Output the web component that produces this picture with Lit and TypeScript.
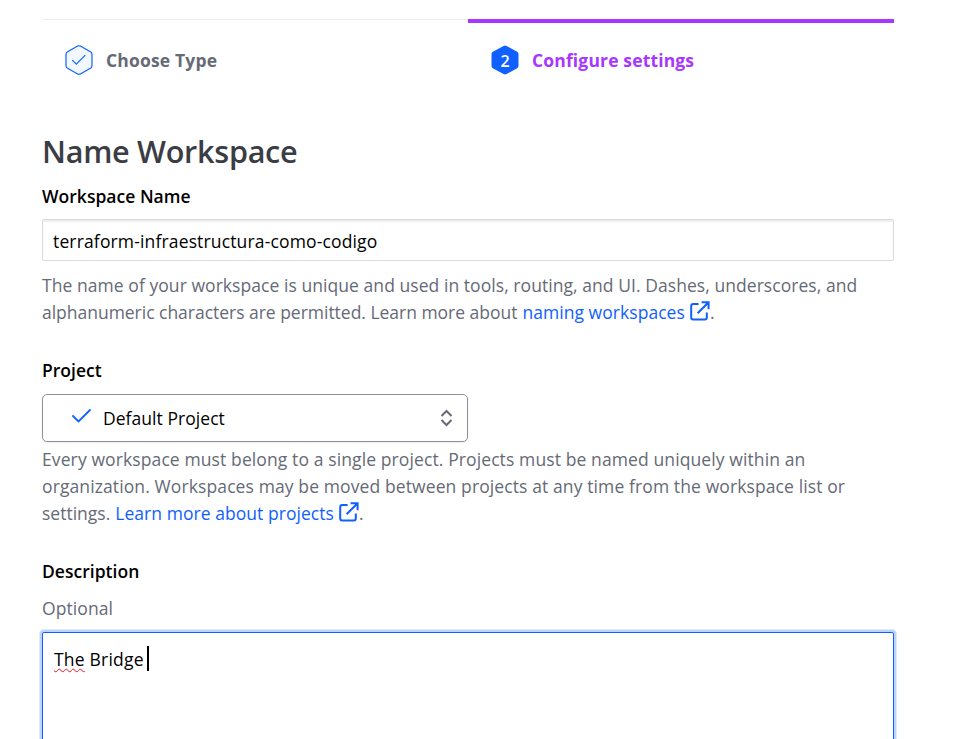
import { LitElement, html, css } from "lit";
import { customElement } from "lit/decorators.js";

const external = html`<svg class="ext" viewBox="0 0 20 20" fill="none" stroke="currentColor" stroke-width="2">
  <path d="M8.6 3H3.2Q1.2 3 1.2 5V16.6Q1.2 18.6 3.2 18.6H14.8Q16.8 18.6 16.8 16.6V11.4"/>
  <path d="M11.6 1.2H18.6V8.2M18.6 1.2L7.6 12.2"/>
</svg>`;

@customElement("app-root")
export class AppRoot extends LitElement {
  static styles = css`
    :host { display: block; height: 739px; overflow: hidden; background: #fff; color: #000;
      font: 400 17.5px/27px "Open Sans", "Noto Sans", sans-serif; }
    .page { width: 852px; margin-left: 42px; padding-top: 19px; display: flex; flex-direction: column; }
    .steps { display: flex; height: 112px; }
    .step { width: 426px; box-sizing: border-box; border-top: 1px solid #ededed; padding: 25px 0 0 23px;
      display: flex; align-items: flex-start; gap: 13px; font-weight: 700; color: #656a76; letter-spacing: .16px; }
    .step.active { border-top: 4px solid #a737ff; padding-top: 22px; color: #a737ff; letter-spacing: .15px; }
    .step span { line-height: 30px; }
    .hex { width: 28px; height: 30px; display: block; flex: none; }
    .hex text { font: 600 16px "Open Sans", sans-serif; letter-spacing: 0; fill: #fff; }
    h1 { margin: 0; height: 52px; font-size: 30.6px; line-height: 40px; font-weight: 600; letter-spacing: -.28px; color: #3b3d45; }
    .label { height: 27px; font-weight: 600; letter-spacing: .02px; }
    span { white-space: pre; }
    .input { margin-top: 9px; height: 42px; box-sizing: border-box; border: 1px solid #dcdcdc; border-radius: 2px;
      box-shadow: inset 0 2px 2px #00000012; padding: 8px 10px; letter-spacing: .15px; }
    .help { margin-top: 11px; color: #656a76; }
    .help.tight { margin-top: 4px; }
    .help div { height: 27px; display: flex; }
    .link { color: #1060ff; display: flex; margin-left: 5px; letter-spacing: .05px; }
    .ext { width: 20px; height: 20px; margin: 2px 0 0 5px; }
    .gap { margin-top: 31px; }
    .select { margin-top: 10px; width: 426px; height: 48px; box-sizing: border-box; border: 1px solid #8c909c;
      border-radius: 5px; box-shadow: 0 1px 2px #656a7622; display: flex; align-items: center; padding: 0 14px 0 28px; letter-spacing: .05px; }
    .tick { width: 21px; height: 16px; margin-top: -5px; }
    .select span { flex: 1; margin-left: 11px; }
    .chev { width: 13px; height: 18px; }
    .optional { margin-top: 10px; color: #656a76; letter-spacing: .08px; }
    .area { margin-top: 10px; height: 150px; box-sizing: border-box; border: 1px solid #1060ff; border-radius: 2px;
      box-shadow: 0 0 0 2px #bdd3ff, 0 0 0 3px #dfe9ff; padding: 13px 11px; display: flex; letter-spacing: .2px; }
    .miss { text-decoration: underline wavy #f01020 1.3px; text-underline-offset: 2px; }
    .caret { width: 2px; height: 25px; background: #000; margin-left: 3px; }
    .wide1 { letter-spacing: .058px; }
    .wide2 { letter-spacing: .109px; }
    .snug { letter-spacing: -.02px; }
  `;

  render() {
    return html`<main class="page">
      <div class="steps">
        <div class="step">
          <svg class="hex" viewBox="0 0 28 30" fill="none" stroke="#1060ff" stroke-width="1.2" stroke-linejoin="round">
            <path fill="#f2f8ff" d="M12.6 1.1Q14 .4 15.4 1.1L25.8 7Q27 7.8 27 9.2V20.8Q27 22.2 25.8 23L15.4 28.9Q14 29.6 12.6 28.9L2.2 23Q1 22.2 1 20.8V9.2Q1 7.8 2.2 7Z"/>
            <path d="M7.3 15.2L11.3 19.2L20.3 10.2"/>
          </svg><span>Choose Type</span>
        </div>
        <div class="step active">
          <svg class="hex" viewBox="0 0 28 30">
            <path fill="#1060ff" d="M12.6 .9Q14 .1 15.4 .9L26.2 6.8Q27.5 7.6 27.5 9V21Q27.5 22.4 26.2 23.2L15.4 29.1Q14 29.9 12.6 29.1L1.8 23.2Q.5 22.4 .5 21V9Q.5 7.6 1.8 6.8Z"/>
            <text x="14" y="21.5" text-anchor="middle">2</text>
          </svg><span>Configure settings</span>
        </div>
      </div>
      <h1>Name Workspace</h1>
      <div class="label">Workspace Name</div>
      <div class="input">terraform-infraestructura-como-codigo</div>
      <div class="help">
        <div><span class="wide1">The name of your workspace is unique and used in tools, routing, and UI. Dashes, underscores, and</span></div>
        <div><span class="snug">alphanumeric characters are permitted. Learn more about</span><a class="link"><span>naming workspaces</span>${external}</a><span>.</span></div>
      </div>
      <div class="label gap">Project</div>
      <div class="select">
        <svg class="tick" viewBox="0 0 21 16" fill="none" stroke="#1060ff" stroke-width="1.8" stroke-linecap="round"><path d="M2 8L7.5 13.5L19 2"/></svg>
        <span>Default Project</span>
        <svg class="chev" viewBox="0 0 13 18" fill="none" stroke="#656a76" stroke-width="2"><path d="M1.5 7L6.5 2L11.5 7M1.5 11L6.5 16L11.5 11"/></svg>
      </div>
      <div class="help tight">
        <div><span class="wide2">Every workspace must belong to a single project. Projects must be named uniquely within an</span></div>
        <div><span class="wide2">organization. Workspaces may be moved between projects at any time from the workspace list or</span></div>
        <div><span>settings.</span><a class="link"><span>Learn more about projects</span>${external}</a><span>.</span></div>
      </div>
      <div class="label gap">Description</div>
      <div class="optional">Optional</div>
      <div class="area"><span><span class="miss">The</span> Bridge</span><i class="caret"></i></div>
    </main>`;
  }
}
